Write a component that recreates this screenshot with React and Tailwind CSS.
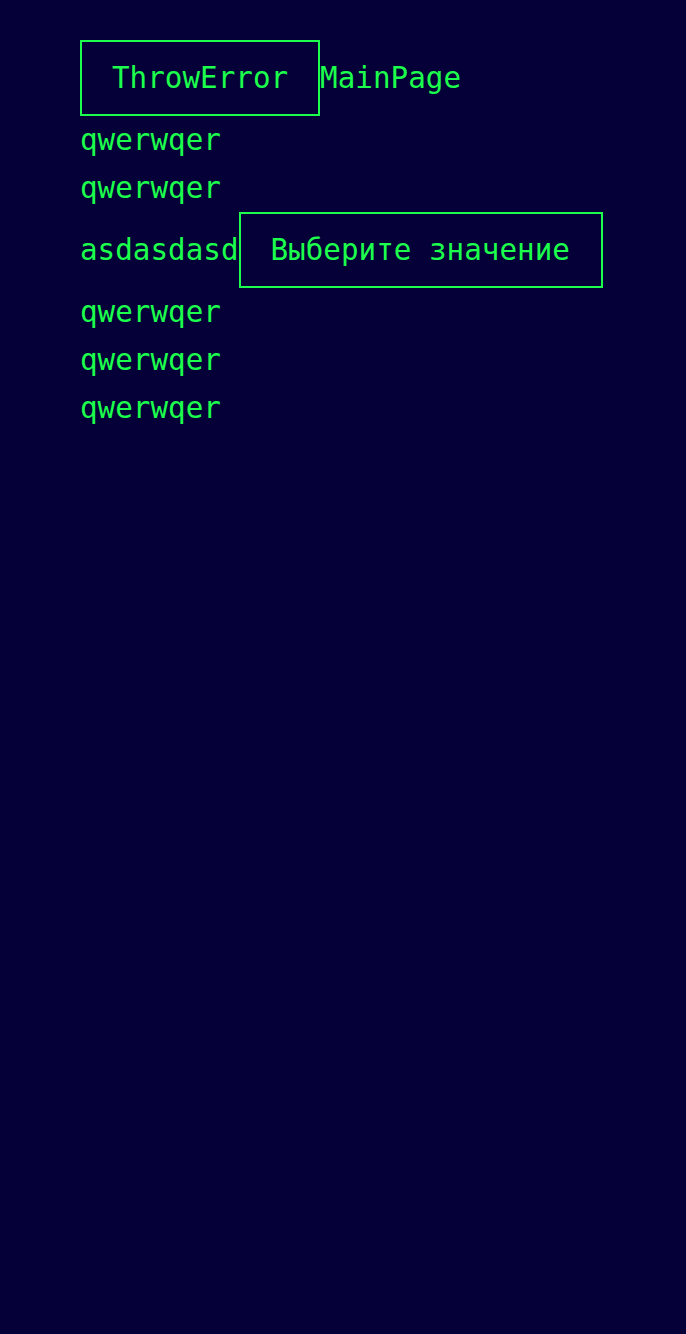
import React from "react";

const ROWS = ["qwerwqer", "qwerwqer"];
const ROWS_AFTER = ["qwerwqer", "qwerwqer", "qwerwqer"];

export default function App() {
  return (
    <div
      className="min-h-screen bg-[#050037] text-[#1cff4c] pt-10 pl-20 text-[29.25px] leading-[48px]"
      style={{ fontFamily: '"DejaVu Sans Mono", monospace' }}
    >
      {/* Header */}
      <div className="flex items-center">
        <button className="h-[76px] border-2 border-[#1cff4c] px-[30px] text-[#1cff4c]">
          ThrowError
        </button>
        <span>MainPage</span>
      </div>

      {ROWS.map((r, i) => (
        <div key={i}>{r}</div>
      ))}

      {/* Select row */}
      <div className="flex items-center">
        <span>asdasdasd</span>
        <div className="h-[76px] w-[364px] border-2 border-[#1cff4c] flex items-center pl-[30px]">
          Выберите значение
        </div>
      </div>

      {ROWS_AFTER.map((r, i) => (
        <div key={i}>{r}</div>
      ))}
    </div>
  );
}
